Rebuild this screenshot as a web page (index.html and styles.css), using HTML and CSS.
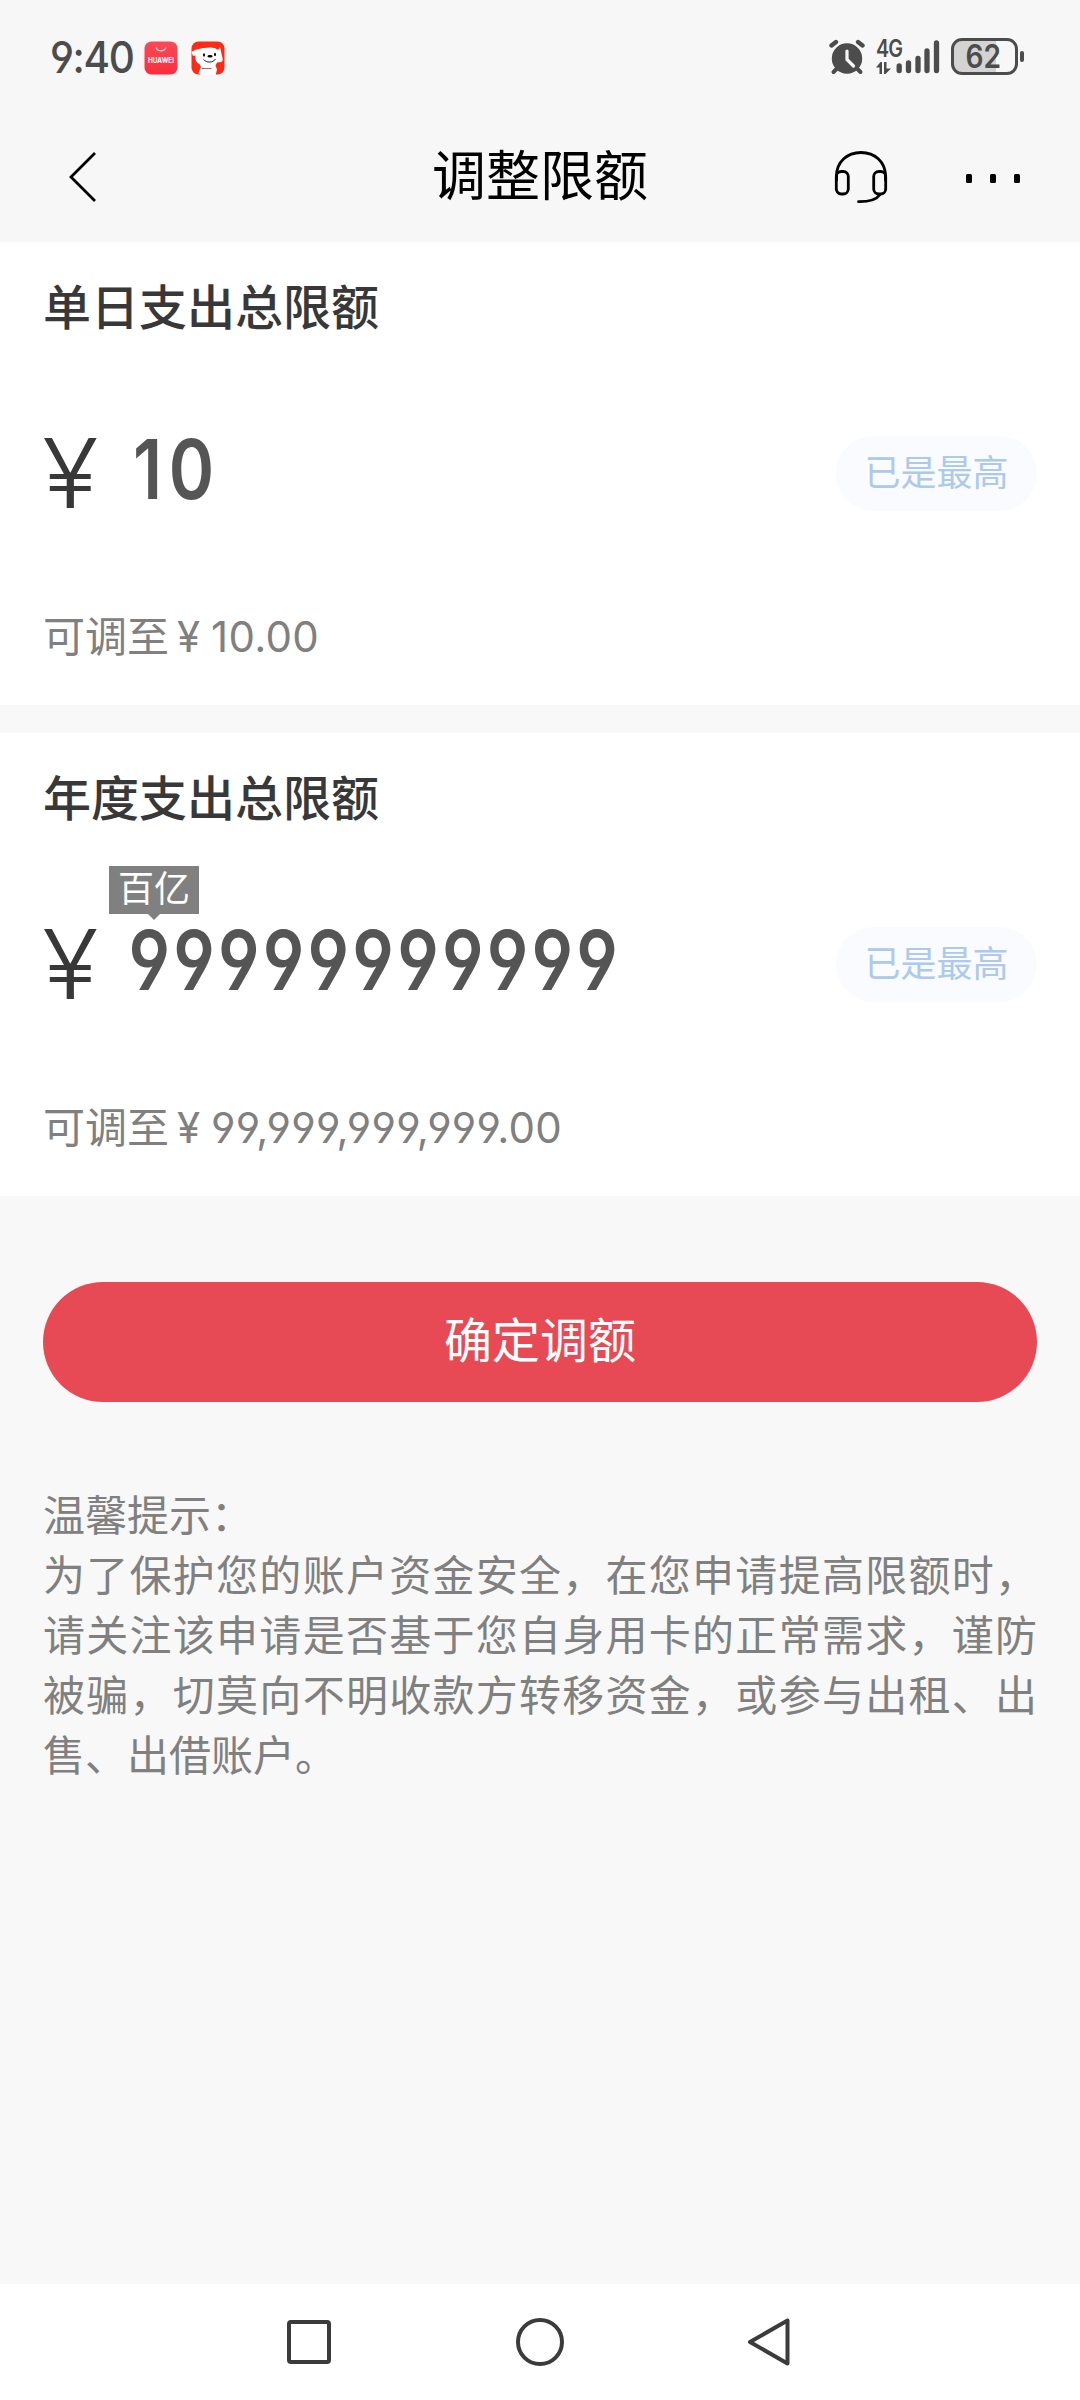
FILE: index.html
```html
<!DOCTYPE html>
<html lang="zh-CN">
<head>
<meta charset="utf-8">
<title>调整限额</title>
<link rel="stylesheet" href="styles.css">
</head>
<body>
<div class="screen">
  <div class="status">
    <div class="status-left">
      <span class="clock"><span class="clock-text">9:40</span></span>
      <svg class="app-icon" width="34" height="34" viewBox="0 0 34 34">
        <defs><linearGradient id="g" x1="0" y1="0" x2="0" y2="1"><stop offset="0" stop-color="#fa4a58"/><stop offset="1" stop-color="#fb2d3d"/></linearGradient></defs>
        <rect x=".5" y=".5" width="33" height="33" rx="7" fill="url(#g)"/>
        <path d="M12 6.500a5.200 4.500 0 0 0 10 0" fill="none" stroke="#ffc0c4" stroke-width="1.300"/>
        <text class="app-name" x="17" y="21.500" text-anchor="middle" textLength="26" lengthAdjust="spacingAndGlyphs">HUAWEI</text>
      </svg>
      <svg class="app-icon second" width="34" height="34" viewBox="0 0 34 34">
        <rect x=".5" y=".5" width="33" height="33" rx="7" fill="#fb2b17"/>
        <path d="M.5 11 4 9c4-1 6-2 9-2 6-1 11-1 14 2l2-3 2 9c1 3 1 6-1 6l-4 .5-1.500 3 1.500 4 -1.500 6H10.500L7.500 32l2.500-6-1.500-3C5 22 4 18 4.500 14.500L2 15z" fill="#fff"/>
        <ellipse cx="13" cy="14" rx="1" ry="1.800"/><ellipse cx="24" cy="13.500" rx="1" ry="1.800"/><ellipse cx="19" cy="15.200" rx="2.600" ry="1.200"/>
        <path d="M12.500 18.500c3 3.500 9.500 3.500 12-.5" fill="none" stroke="#222" stroke-width="1"/>
        <path d="M10.500 27.500h10" stroke="#a33" stroke-width=".8"/>
      </svg>
    </div>
    <div class="status-right">
      <svg width="38" height="38" viewBox="0 0 38 38" fill="#4c4c4c" stroke="#4c4c4c" stroke-linecap="round">
        <circle cx="18" cy="20.500" r="15.200" stroke="none"/>
        <path d="M2.500 7.500 7 4M33.500 7.500 29 4" stroke-width="4.400"/>
        <path d="M8 30.500l-3.500 3.500M28 30.500l3.500 3.500" stroke-width="4"/>
        <path d="M18 13v8.500l6.500 6.500" fill="none" stroke="#f7f7f7" stroke-width="3.200"/>
      </svg>
      <div class="signal">
        <div class="network">
          <span class="network-name">4G</span>
          <svg width="16" height="12" viewBox="0 0 16 12" fill="#4c4c4c"><path d="M0 5.500 4.500 0H6v12H3.500V5.500zM8 0h2.500v6.500H15L9.500 12H8z"/></svg>
        </div>
        <svg width="44" height="34" viewBox="0 0 44 34" stroke="#4c4c4c" stroke-width="5.300" stroke-linecap="round"><path d="M3.200 26v4.500M12.500 23v7.500M22 18.500v12M31 11v19.500M40.500 3v27.500"/></svg>
      </div>
      <div class="battery"><span class="battery-body"><span class="battery-text">62</span></span><i class="battery-tip"></i></div>
    </div>
  </div>

  <header class="header">
    <svg class="back" width="30" height="52" viewBox="0 0 30 52" fill="none" stroke="#000" stroke-width="2.800"><path d="M27 2 3 26l24 24"/></svg>
    <h1 class="title">调整限额</h1>
    <div class="actions">
      <svg width="54" height="54" viewBox="0 0 54 54" fill="none" stroke="#000" stroke-width="2.800" stroke-linecap="round">
        <path d="M2.500 30V26C2.500 12 13 2.500 27 2.500S51.500 12 51.500 26v4"/>
        <rect x="2.300" y="21.500" width="12" height="22.500" rx="5"/><rect x="39.700" y="21.500" width="12" height="22.500" rx="5"/>
        <path d="M46 44.500c-4 6-12 7.300-21.500 7.200"/>
      </svg>
      <div class="more"><i></i><i></i><i></i></div>
    </div>
  </header>

  <main>
    <section class="card">
      <h2 class="card-title">单日支出总限额</h2>
      <div class="amount-row">
        <span class="yen">¥</span>
        <span class="amount short">10</span>
        <span class="badge">已是最高</span>
      </div>
      <p class="note">可调至<span class="note-yen">¥</span><span class="note-num">10.00</span></p>
    </section>

    <section class="card">
      <h2 class="card-title">年度支出总限额</h2>
      <div class="amount-row">
        <span class="yen">¥</span>
        <span class="amount">99999999999</span>
        <span class="unit">百亿</span>
        <span class="badge">已是最高</span>
      </div>
      <p class="note">可调至<span class="note-yen">¥</span><span class="note-num">99,999,999,999.00</span></p>
    </section>

    <button class="confirm">确定调额</button>

    <div class="tips">
      <p>温馨提示：</p>
      <p>为了保护您的账户资金安全，在您申请提高限额时，请关注该申请是否基于您自身用卡的正常需求，谨防被骗，切莫向不明收款方转移资金，或参与出租、出售、出借账户。</p>
    </div>
  </main>

  <nav class="system-nav">
    <svg width="50" height="50" viewBox="0 0 50 50"><rect x="5" y="5" width="40" height="40" rx="2"/></svg>
    <svg width="50" height="50" viewBox="0 0 50 50"><circle cx="25" cy="25" r="22"/></svg>
    <svg width="50" height="50" viewBox="0 0 50 50"><path d="M41.500 3.500v43L4 25z"/></svg>
  </nav>
</div>
</body>
</html>
```
FILE: styles.css
```css
* { box-sizing: border-box; margin: 0; padding: 0; }

body {
  background: #f8f8f8;
  font-family: "Inter", "Noto Sans CJK SC", sans-serif;
  font-feature-settings: "cv04" 1;
  color: #333;
}

svg { display: block; flex: none; }

.screen { width: 1080px; height: 2400px; display: flex; flex-direction: column; }

.status {
  height: 115px;
  padding: 0 56px 0 50px;
  display: flex;
  justify-content: space-between;
  background: #f7f7f7;
  color: #4c4c4c;
}
.status-left { display: flex; align-items: center; height: 115px; }
.clock { width: 94px; font-size: 44px; font-weight: 500; line-height: 117px; white-space: nowrap; }
.clock-text { display: inline-block; letter-spacing: -1.5px; transform: scaleX(.92); transform-origin: 0 50%; }
.app-icon.second { margin-left: 13px; }
.app-name { font-size: 7px; font-weight: 700; fill: #fff; }
.status-right { display: flex; align-items: flex-start; padding-top: 38px; }
.signal { display: flex; padding: 2px 0 0 9px; }
.network { width: 20px; display: flex; flex-direction: column; gap: 5px; white-space: nowrap; }
.network-name { font-size: 24px; font-weight: 600; line-height: 17px; letter-spacing: -1px; transform: scaleX(.82); transform-origin: 0 50%; }
.battery { display: flex; align-items: center; gap: 2px; margin-left: 11px; }
.battery-body {
  width: 67px;
  height: 37px;
  border: 3px solid #4c4c4c;
  border-radius: 11px;
  background: linear-gradient(90deg, #d3d3d3 42px, #f7f7f7 42px);
  font-size: 32px;
  font-weight: 600;
  line-height: 31px;
  text-align: center;
}
.battery-text { display: inline-block; transform: translateX(-1px) scaleX(.88); }
.battery-tip { width: 4px; height: 11px; border-radius: 2px; background: #4c4c4c; }

.header {
  height: 127px;
  padding: 0 60px 3px 68px;
  display: grid;
  grid-template-columns: 1fr auto 1fr;
  align-items: center;
  background: #f7f7f7;
  color: #000;
}
.title { font-size: 54px; font-weight: 400; line-height: 80px; margin-right: 8px; }
.actions { display: flex; align-items: center; justify-content: flex-end; gap: 78px; }
.more { display: flex; gap: 18px; padding-top: 3px; }
.more i { width: 6px; height: 9px; border-radius: 1.5px; background: #000; }

.card { height: 463px; padding: 30px 43px 0; background: #fff; }
.card + .card { margin-top: 28px; }
.card-title { height: 72px; font-size: 48px; font-weight: 500; line-height: 72px; color: #383838; }
.amount-row { position: relative; height: 100px; margin-top: 79px; display: flex; align-items: center; }
.yen { width: 84px; font-size: 96px; font-weight: 300; line-height: 100px; color: #383838; transform: scaleX(1.08); transform-origin: 8px 50%; }
.amount {
  padding-bottom: 7px;
  font-size: 82px;
  font-weight: 600;
  line-height: 93px;
  letter-spacing: .25px;
  font-feature-settings: "cv04" 1, "tnum" 1;
  color: #555;
  transform: scaleX(.84);
  transform-origin: 0 50%;
}
.amount.short { margin-left: 6px; letter-spacing: 8px; font-feature-settings: "cv04" 1; }
.badge {
  margin-left: auto;
  width: 201px;
  height: 75px;
  border-radius: 38px;
  background: #f9fbff;
  color: #adc9ec;
  font-size: 36px;
  line-height: 75px;
  text-align: center;
}
.unit {
  position: absolute;
  left: 66px;
  top: -48px;
  width: 90px;
  height: 48px;
  background: #808080;
  color: #fff;
  font-size: 36px;
  line-height: 46px;
  text-align: center;
}
.unit::after {
  content: "";
  position: absolute;
  left: 39px;
  top: 48px;
  border: 6px solid transparent;
  border-top-color: #808080;
  border-bottom: 0;
}
.note { display: flex; margin-top: 84px; font-size: 42px; line-height: 60px; color: #808080; }
.note-yen { width: 42px; padding-left: 8px; }
.note-num { letter-spacing: .3px; }

.confirm {
  display: block;
  width: 994px;
  height: 120px;
  margin: 86px auto 0;
  border: 0;
  border-radius: 60px;
  background: #e84a55;
  color: #fff;
  font: inherit;
  font-size: 48px;
  line-height: 114px;
  padding-bottom: 3px;
}

.tips { margin: 84px 43px 0; font-size: 42px; line-height: 60px; color: #808080; text-align: justify; text-spacing-trim: space-all; }

.system-nav {
  margin-top: auto;
  height: 116px;
  display: flex;
  justify-content: center;
  gap: 181px;
  padding-top: 33px;
  background: #fff;
}
.system-nav svg { fill: none; stroke: #3b3b3b; stroke-width: 4; stroke-linejoin: round; }
```
